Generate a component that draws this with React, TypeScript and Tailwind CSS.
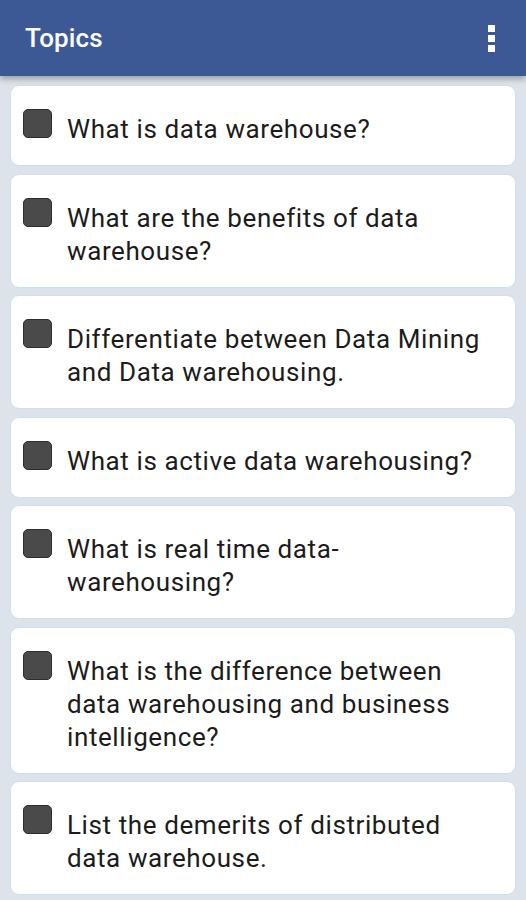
import React from "react";

const topics = [
  "What is data warehouse?",
  "What are the benefits of data warehouse?",
  "Differentiate between Data Mining and Data warehousing.",
  "What is active data warehousing?",
  "What is real time data-warehousing?",
  "What is the difference between data warehousing and business intelligence?",
  "List the demerits of distributed data warehouse.",
];

export default function App() {
  return (
    <div
      className="w-[526px] h-[900px] overflow-hidden bg-[#dde3ea] flex flex-col"
      style={{ fontFamily: "Roboto, 'Noto Sans', sans-serif" }}
    >
      <header className="h-[76px] shrink-0 bg-[#3c5996] flex items-center justify-between pl-[25px] pr-[31px] shadow-[0_3px_6px_rgba(0,0,0,0.3)] relative z-10">
        <h1 className="text-white text-[26px] font-medium tracking-[0.1px]">Topics</h1>
        <div className="flex flex-col gap-[3px]">
          <span className="block w-[7px] h-[7px] bg-white" />
          <span className="block w-[7px] h-[7px] bg-white" />
          <span className="block w-[7px] h-[7px] bg-white" />
        </div>
      </header>
      <main className="flex flex-col gap-[7.5px] px-[10px] pt-[9px]">
        {topics.map((t) => (
          <div
            key={t}
            className="bg-white rounded-[9px] border border-[#cfdff0] flex items-start pl-[12px] pr-[20px] pt-[23px] pb-[19px]"
          >
            <span className="shrink-0 w-[29px] h-[29px] rounded-[5px] bg-[#4a4a4a] border border-[#2e2e2e]" />
            <p className="ml-[15px] mt-[4px] w-[425px] text-[26px] leading-[33px] tracking-[0.6px] text-[#1c1c1c]">
              {t}
            </p>
          </div>
        ))}
      </main>
    </div>
  );
}
